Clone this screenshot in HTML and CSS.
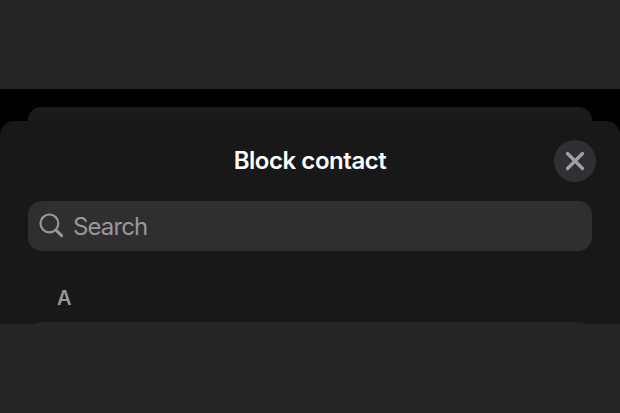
FILE: index.html
```
<!DOCTYPE html>
<html lang="en">
<head>
    <meta charset="UTF-8">
    <meta name="viewport" content="width=device-width, initial-scale=1.0">
    <title>Block contact</title>
    <link rel="stylesheet" href="styles.css">
</head>
<body>
    <div class="screen">
        <div class="back-sheet"></div>
        <div class="sheet">
            <div class="header">
                <h1>Block contact</h1>
                <button class="close-button" aria-label="Close">
                    <svg width="20" height="20" viewBox="0 0 20 20">
                        <path d="M2.5 2.5 17.5 17.5M17.5 2.5 2.5 17.5" />
                    </svg>
                </button>
            </div>
            <div class="search">
                <svg class="search-icon" width="26" height="26" viewBox="0 0 26 26">
                    <circle cx="10.4" cy="10.4" r="8.9" />
                    <path class="handle" d="M17.2 17.2 22.6 22.6" />
                </svg>
                <span class="search-text">Search</span>
            </div>
            <div class="section-title">A</div>
            <div class="contact-list"></div>
        </div>
    </div>
</body>
</html>
```

FILE: styles.css
```
* {
    box-sizing: border-box;
}

body {
    margin: 0;
    height: 413px;
    padding-top: 89px;
    background-color: #252525;
    font-family: Inter, "Liberation Sans", sans-serif;
    overflow: hidden;
}

.screen {
    height: 235px;
    padding-top: 18px;
    background-color: #000;
    overflow: hidden;
}

.back-sheet {
    height: 14px;
    margin: 0 28px;
    border-radius: 13px 13px 0 0;
    background-color: #1b1b1c;
}

.sheet {
    height: 203px;
    padding: 18px 28px 0;
    border-radius: 14px 14px 0 0;
    background-color: #181818;
}

.header {
    display: grid;
    grid-template-columns: 1fr auto 1fr;
    align-items: center;
    height: 44px;
    margin-right: -4px;
    margin-left: -4px;
}

h1 {
    grid-column: 2;
    margin: 0;
    color: #fff;
    font-size: 24px;
    font-weight: 600;
    line-height: 30px;
    letter-spacing: -0.45px;
}

.close-button {
    display: flex;
    justify-content: center;
    align-items: center;
    justify-self: end;
    width: 42px;
    height: 42px;
    padding: 0;
    border: none;
    border-radius: 50%;
    background-color: #2f3032;
}

.close-button svg {
    fill: none;
    stroke: #a0a1a6;
    stroke-width: 3.2;
    stroke-linecap: round;
}

.search {
    display: flex;
    align-items: center;
    gap: 8px;
    height: 50px;
    margin-top: 18px;
    padding-left: 11px;
    border-radius: 14px;
    background-color: #2f2f2f;
}

.search-icon {
    fill: none;
    stroke: #98989a;
    stroke-width: 2.2;
}

.search-icon .handle {
    stroke-width: 3;
    stroke-linecap: round;
}

.search-text {
    padding-top: 2px;
    color: #98989c;
    font-size: 24px;
    line-height: 30px;
    letter-spacing: -0.9px;
}

.section-title {
    margin: 35px 0 0 29px;
    color: #979797;
    font-size: 20px;
    font-weight: 600;
    line-height: 24px;
}

/* only the top edge of the list is visible */
.contact-list {
    height: 20px;
    margin-top: 12px;
    border-radius: 14px 14px 0 0;
    background-color: #252525;
}
```
